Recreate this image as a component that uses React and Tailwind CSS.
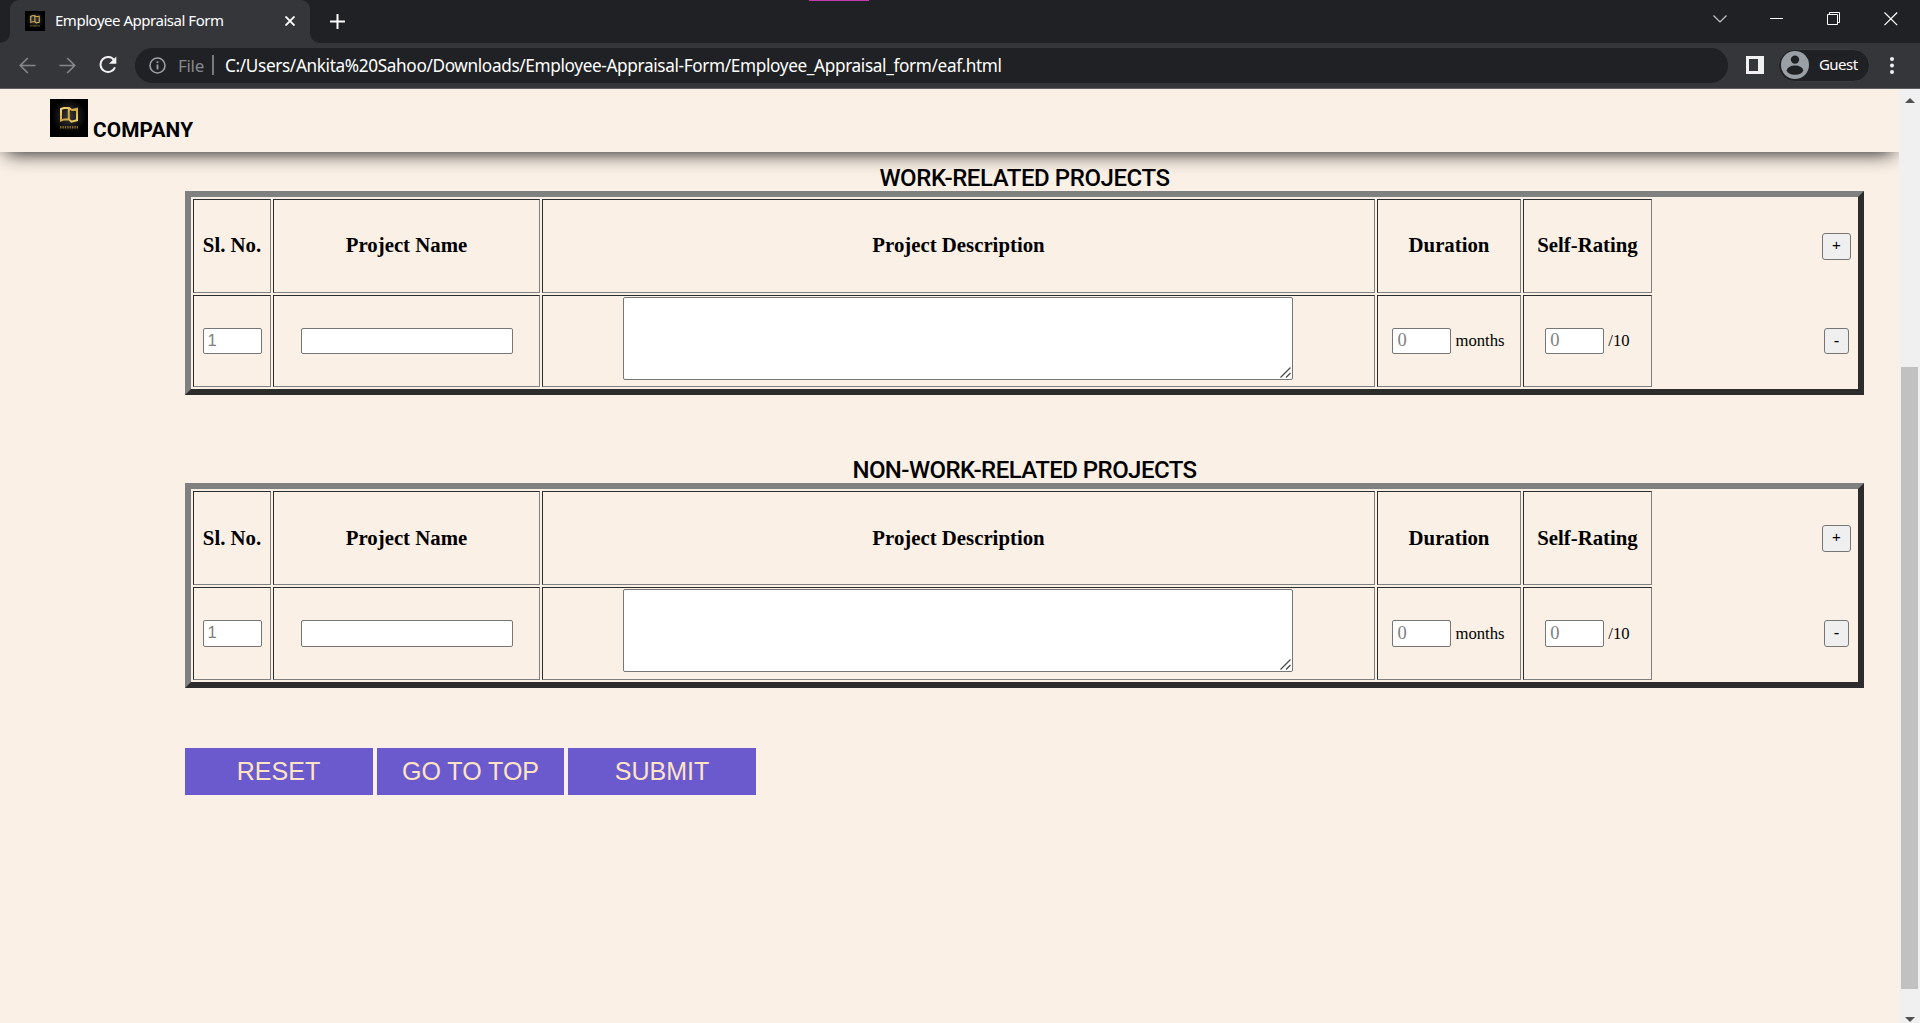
import React from 'react';

const UI = 'font-["Noto_Sans",sans-serif]';
const SERIF = 'font-["Liberation_Serif",serif]';

function CompanyLogo({ className }) {
  return (
    <svg viewBox="0 0 38 38" className={className} aria-hidden="true">
      <defs>
        <radialGradient id="logoGlow">
          <stop offset="0" stopColor="#3a3a3a" />
          <stop offset="1" stopColor="#000" />
        </radialGradient>
        <linearGradient id="logoGold" x1="0" y1="0" x2="1" y2="1">
          <stop offset="0" stopColor="#f3dc7c" />
          <stop offset="0.5" stopColor="#d0a43c" />
          <stop offset="1" stopColor="#f0d66f" />
        </linearGradient>
      </defs>
      <rect width="38" height="38" fill="#000" />
      <circle cx="19" cy="17" r="17" fill="url(#logoGlow)" />
      <path
        d="M18 20.4 H14 L11 21.6 V10 L14 9 H18.8 V20.4 L21.4 22.6 L27 21.2 V9.8 L22 11 L19 9.2"
        fill="none"
        stroke="url(#logoGold)"
        strokeWidth="2"
      />
      <path d="M10 28.2 H28" stroke="#8a6d28" strokeWidth="2.6" strokeDasharray="1.4 1" />
    </svg>
  );
}

function TabStrip() {
  return (
    <div className="relative flex h-[43px] items-stretch bg-[#202124] pl-[10px] text-white">
      <div className="absolute left-[809px] top-0 h-px w-[60px] bg-[#c239b3]" />
      <div className="relative flex w-[300px] items-center rounded-t-[9px] bg-[#35363a] pb-px pl-[15px]">
        <svg className="absolute -left-[10px] bottom-0 size-[10px]" viewBox="0 0 10 10">
          <path d="M10 0 V10 H0 A10 10 0 0 0 10 0Z" fill="#35363a" />
        </svg>
        <svg className="absolute -right-[10px] bottom-0 size-[10px]" viewBox="0 0 10 10">
          <path d="M0 0 V10 H10 A10 10 0 0 1 0 0Z" fill="#35363a" />
        </svg>
        <CompanyLogo className="size-5" />
        <span className={`${UI} ml-[10px] w-[230px] whitespace-nowrap pb-[2px] text-[15px] tracking-[-0.47px]`}>
          Employee Appraisal Form
        </span>
        <svg className="size-[10px]" viewBox="0 0 10 10" stroke="#fff" strokeWidth="1.9">
          <path d="M.5 .5 L9.5 9.5 M9.5 .5 L.5 9.5" />
        </svg>
      </div>
      <svg className="ml-5 mt-[14px] size-[15px]" viewBox="0 0 15 15" stroke="#fff" strokeWidth="2">
        <path d="M7.5 0 V15 M0 7.5 H15" />
      </svg>
      <div className="mr-[22px] ml-auto flex gap-[43px] pt-[12px]">
        <svg className="size-[14px]" viewBox="0 0 14 14" fill="none" stroke="#ccc" strokeWidth="1.1">
          <path d="M.5 3.5 L7 10 L13.5 3.5" />
        </svg>
        <svg className="size-[14px]" viewBox="0 0 14 14" stroke="#fff">
          <path d="M0 6.5 H13" />
        </svg>
        <svg className="size-[14px]" viewBox="0 0 14 14" fill="none" stroke="#fff">
          <path d="M.5 2.5 H10.5 V12.5 H.5Z M2.5 2.5 V.5 H12.5 V10.5 H10.5" />
        </svg>
        <svg className="size-[14px]" viewBox="0 0 14 14" stroke="#fff" strokeWidth="1.2">
          <path d="M.5 .5 L13.2 13.2 M13.2 .5 L.5 13.2" />
        </svg>
      </div>
    </div>
  );
}

function Toolbar() {
  return (
    <div className={`${UI} flex h-[46px] items-center border-b border-[#5d5e61] bg-[#35363a] pb-px text-white`}>
      <svg className="ml-[19px] size-[17px]" viewBox="0 0 17 17" fill="none" stroke="#86878a" strokeWidth="1.7">
        <path d="M16.5 8.5 H1.5 M8.8 1 L1.3 8.5 L8.8 16" />
      </svg>
      <svg className="ml-[23px] size-[17px]" viewBox="0 0 17 17" fill="none" stroke="#86878a" strokeWidth="1.7">
        <path d="M.5 8.5 H15.5 M8.2 1 L15.7 8.5 L8.2 16" />
      </svg>
      <svg className="ml-[23px] size-[18px]" viewBox="0 0 18 18">
        <path d="M15.2 4.2 A7.5 7.5 0 1 0 16 11.3" fill="none" stroke="#f1f1f2" strokeWidth="2" />
        <path d="M17.3 .4 V7.7 H10Z" fill="#f1f1f2" />
      </svg>
      <div className="ml-[18px] flex h-[35px] w-[1593px] items-center rounded-full bg-[#202124] pl-[14px]">
        <svg className="size-[17px]" viewBox="0 0 17 17" fill="none" stroke="#9aa0a6" strokeWidth="1.6">
          <circle cx="8.5" cy="8.5" r="7.5" />
          <path d="M8.5 7.5 V12.5 M8.5 4.3 V6" strokeWidth="1.8" />
        </svg>
        <span className="ml-3 w-[34px] whitespace-nowrap pt-px text-[17px] tracking-[-0.3px] text-[#85888c]">File</span>
        <span className="h-5 w-[2px] bg-[#76797d]" />
        <span className="ml-[11px] whitespace-nowrap pt-px text-[17.2px] tracking-[-0.355px]">
          C:/Users/Ankita%20Sahoo/Downloads/Employee-Appraisal-Form/Employee_Appraisal_form/eaf.html
        </span>
      </div>
      <svg className="ml-[18px] size-[18px]" viewBox="0 0 18 18">
        <rect width="18" height="18" fill="#f1f1f2" />
        <rect x="3" y="3" width="9" height="12" fill="#35363a" />
      </svg>
      <div className="ml-[14px] flex h-[33px] w-[92px] items-center rounded-full border border-[#3c3d41] bg-[#202124] pl-[2px]">
        <svg className="size-7" viewBox="0 0 28 28">
          <circle cx="14" cy="14" r="14" fill="#9aa0a6" />
          <circle cx="14" cy="8.6" r="4.2" fill="#202124" />
          <ellipse cx="14" cy="19.2" rx="8.2" ry="4.6" fill="#202124" />
        </svg>
        <span className="ml-[10px] pb-px text-[15px] tracking-[-0.55px]">Guest</span>
      </div>
      <svg className="ml-5 h-[17px] w-1" viewBox="0 0 4 17" fill="#f1f1f2">
        <circle cx="2" cy="2" r="2" />
        <circle cx="2" cy="8.5" r="2" />
        <circle cx="2" cy="15" r="2" />
      </svg>
    </div>
  );
}

function Cell({ children, className = '' }) {
  return (
    <div
      className={`flex items-center justify-center border border-t-[#2c2c2c] border-l-[#2c2c2c] border-r-[#808080] border-b-[#808080] ${className}`}
    >
      {children}
    </div>
  );
}

function Head({ children, tall }) {
  return (
    <Cell className={tall ? '' : 'pb-[2px]'}>
      <span className="whitespace-nowrap text-[20.8px] leading-6 font-bold">{children}</span>
    </Cell>
  );
}

function Field({ placeholder, className, tall }) {
  return (
    <input
      placeholder={placeholder}
      className={`${className} ${tall ? 'h-[27px]' : 'h-[26px]'} rounded-[2px] border border-[#767676] bg-white px-[4px] placeholder:text-[#808080]`}
    />
  );
}

function DescriptionBox() {
  return (
    <div className="relative mr-[2px] h-[83px] w-[670px]">
      <textarea className="block size-full resize-none rounded-[2px] border border-[#767676] bg-white" />
      <svg className="absolute right-[2px] bottom-[2px] size-[11px]" viewBox="0 0 11 11" stroke="#4a4a4a" strokeWidth="1.3">
        <path d="M.5 10.5 L10.5 .5 M6 10.5 L10.5 6" />
      </svg>
    </div>
  );
}

function RowButton({ children, className }) {
  return (
    <div className="flex items-center justify-end">
      <div className="flex w-[39px] justify-center">
        <button
          className={`${className} flex items-center justify-center rounded-[3px] border border-[#767676] bg-[#efefef] font-["Liberation_Sans",sans-serif] leading-none`}
        >
          {children}
        </button>
      </div>
    </div>
  );
}

function ProjectTable({ title, titleClass, rows, tall }) {
  return (
    <section className="w-[1679px]">
      <h2
        className={`${titleClass} flex h-[29px] items-center justify-center whitespace-nowrap pt-[2px] font-[Roboto,sans-serif] text-[24px] font-medium`}
      >
        {title}
      </h2>
      <div className={`${SERIF} border-6 border-t-[#808080] border-l-[#808080] border-r-[#2c2c2c] border-b-[#2c2c2c] p-[2px]`}>
        <div className={`grid ${rows} grid-cols-[78px_267px_833px_144px_129px_1fr] gap-[2px]`}>
          <Head tall={tall}>Sl. No.</Head>
          <Head tall={tall}>Project Name</Head>
          <Head tall={tall}>Project Description</Head>
          <Head tall={tall}>Duration</Head>
          <Head tall={tall}>Self-Rating</Head>
          <RowButton className="h-[27px] w-[29px] pb-[3px] text-[15px]">+</RowButton>

          <Cell>
            <Field placeholder="1" tall={tall} className='w-[59px] pb-px font-["Liberation_Sans",sans-serif] text-[16.67px]' />
          </Cell>
          <Cell>
            <Field tall={tall} className="w-[212px]" />
          </Cell>
          <Cell className="items-start pt-px">
            <DescriptionBox />
          </Cell>
          <Cell className="gap-1 pr-px text-[16.67px]">
            <Field placeholder="0" tall={tall} className="w-[59px] text-[18.5px]" />
            <span className="pb-px">months</span>
          </Cell>
          <Cell className="gap-1 text-[16.67px]">
            <Field placeholder="0" tall={tall} className="w-[59px] text-[18.5px]" />
            <span className="pb-px">/10</span>
          </Cell>
          <RowButton className={tall ? 'h-[27px] w-[25px] text-[16.67px]' : 'h-[26px] w-[25px] text-[16.67px]'}>-</RowButton>
        </div>
      </div>
    </section>
  );
}

function Action({ children, className }) {
  return (
    <button className={`${className} h-[47px] bg-[#6a5acd] font-["Liberation_Sans",sans-serif] text-[25px] text-[#ffe4c4]`}>
      {children}
    </button>
  );
}

function Scrollbar() {
  return (
    <div className="flex w-[21px] flex-col items-center bg-[#f0f0f0] pt-[9px]">
      <svg className="h-[5px] w-[10px]" viewBox="0 0 10 5" fill="#505050">
        <path d="M0 5 L5 0 L10 5Z" />
      </svg>
      <div className="mt-[264px] h-[622px] w-[17px] bg-[#c1c1c1]" />
      <svg className="mt-[28px] h-[5px] w-[10px]" viewBox="0 0 10 5" fill="#505050">
        <path d="M0 0 L5 5 L10 0Z" />
      </svg>
    </div>
  );
}

export default function App() {
  return (
    <div className="flex h-[1023px] w-[1920px] flex-col overflow-hidden text-black">
      <TabStrip />
      <Toolbar />
      <div className="flex min-h-0 flex-1">
        <div className="w-[1899px] overflow-hidden bg-[#faf0e6]">
          <header className="flex h-[63px] items-start bg-[#faf0e6] pt-[10px] pl-[50px] shadow-[0_6px_20px_-6px_#000]">
            <CompanyLogo className="size-[38px]" />
            <span className="mt-[20px] ml-[5px] font-[Roboto,sans-serif] text-[20.8px] leading-[23px] font-bold tracking-[0.15px]">
              COMPANY
            </span>
          </header>
          <main className="pt-[10px] pl-[185px]">
            <ProjectTable title="WORK-RELATED PROJECTS" titleClass="tracking-[-0.43px]" rows="grid-rows-[94px_92px]" />
            <div className="h-[59px]" />
            <ProjectTable title="NON-WORK-RELATED PROJECTS" titleClass="tracking-[-0.55px]" rows="grid-rows-[94px_93px]" tall />
            <div className="mt-[60px] flex gap-1">
              <Action className="w-[188px] pr-px">RESET</Action>
              <Action className="w-[187px]">GO TO TOP</Action>
              <Action className="w-[188px]">SUBMIT</Action>
            </div>
          </main>
        </div>
        <Scrollbar />
      </div>
    </div>
  );
}
